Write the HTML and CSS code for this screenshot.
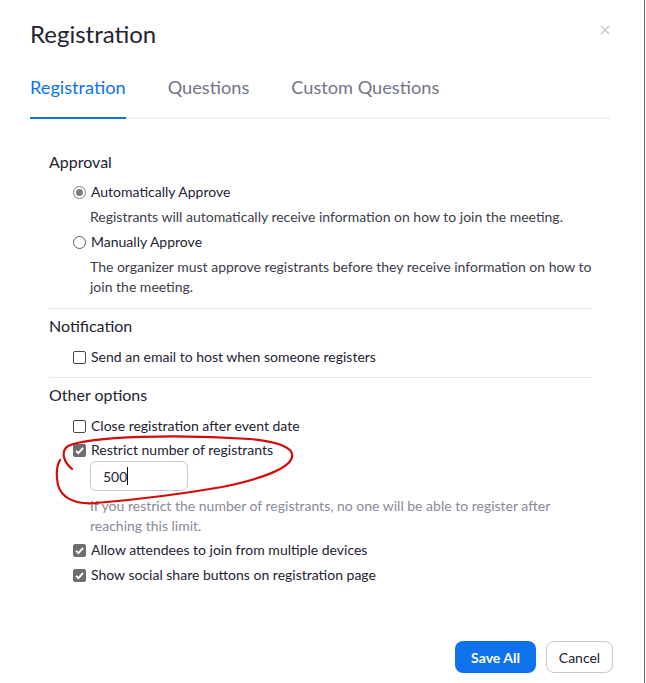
FILE: index.html
```html
<!DOCTYPE html>
<html lang="en">
<head>
<meta charset="utf-8">
<title>Registration</title>
<link rel="stylesheet" href="styles.css">
</head>
<body>
<div class="dialog">
  <div class="header">
    <h1 class="title">Registration</h1>
    <span class="close" aria-label="Close">
      <svg width="10" height="10" viewBox="0 0 10 10"><path d="M1 1L9 9M9 1L1 9" stroke="#c4c4c4" stroke-width="1.3" fill="none"/></svg>
    </span>
  </div>
  <div class="tabs">
    <div class="tab active">Registration</div>
    <div class="tab">Questions</div>
    <div class="tab">Custom Questions</div>
  </div>

  <div class="content">
    <section class="group first">
      <h2 class="group-title">Approval</h2>
      <div class="option">
        <span class="radio checked"></span>
        <span class="label">Automatically Approve</span>
      </div>
      <p class="desc">Registrants will automatically receive information on how to join the meeting.</p>
      <div class="option gap-lg">
        <span class="radio"></span>
        <span class="label">Manually Approve</span>
      </div>
      <p class="desc">The organizer must approve registrants before they receive information on how to join the meeting.</p>
    </section>

    <section class="group second">
      <h2 class="group-title">Notification</h2>
      <div class="option">
        <span class="cb"></span>
        <span class="label">Send an email to host when someone registers</span>
      </div>
    </section>

    <section class="group last">
      <h2 class="group-title">Other options</h2>
      <div class="option">
        <span class="cb"></span>
        <span class="label">Close registration after event date</span>
      </div>
      <div class="option gap-tight">
        <span class="cb checked"><svg width="13" height="13" viewBox="0 0 13 13"><path d="M3 6.8L5.4 9.2L10 4" stroke="#fff" stroke-width="1.9" fill="none"/></svg></span>
        <span class="label">Restrict number of registrants</span>
      </div>
      <div class="input"><span>500</span><span class="caret"></span></div>
      <p class="desc muted">If you restrict the number of registrants, no one will be able to register after reaching this limit.</p>
      <div class="option gap-xs">
        <span class="cb checked"><svg width="13" height="13" viewBox="0 0 13 13"><path d="M3 6.8L5.4 9.2L10 4" stroke="#fff" stroke-width="1.9" fill="none"/></svg></span>
        <span class="label">Allow attendees to join from multiple devices</span>
      </div>
      <div class="option gap-sm">
        <span class="cb checked"><svg width="13" height="13" viewBox="0 0 13 13"><path d="M3 6.8L5.4 9.2L10 4" stroke="#fff" stroke-width="1.9" fill="none"/></svg></span>
        <span class="label">Show social share buttons on registration page</span>
      </div>
    </section>
  </div>

  <div class="footer">
    <button class="btn primary">Save All</button>
    <button class="btn secondary">Cancel</button>
  </div>

  <svg class="annotation" width="646" height="683" viewBox="0 0 646 683">
    <path d="M72 469 C64 462 60 452 68 446 C90 436 180 434 250 439 C280 442 294 448 292 457 C290 468 262 479 222 487 C182 494 132 500 96 503 C72 505 61 496 58 485 C56 475 56 467 60 460" stroke="#d40b0b" stroke-width="2.2" fill="none" stroke-linecap="round"/>
  </svg>
</div>
</body>
</html>
```

FILE: styles.css
```css
* {
  box-sizing: border-box;
}

html, body {
  margin: 0;
  padding: 0;
  background: #ffffff;
}

body {
  font-family: Lato, "Open Sans", "Liberation Sans", sans-serif;
  color: #232333;
}

.dialog {
  position: relative;
  width: 645px;
  height: 683px;
  border-right: 1px solid #6a6a6a;
  display: flex;
  flex-direction: column;
  background: #fff;
}

.header {
  display: flex;
  align-items: center;
  justify-content: space-between;
  padding: 18px 34px 0 30px;
}

.title {
  margin: 0;
  font-size: 24px;
  line-height: 32px;
  font-weight: 400;
  color: #232333;
}

.close {
  display: flex;
  margin-top: -8px;
}

.tabs {
  display: flex;
  gap: 42px;
  margin: 25px 34px 0 30px;
  border-bottom: 2px solid #f1f1f3;
}

.tab {
  font-size: 18.2px;
  line-height: 24px;
  padding-bottom: 18px;
  color: #747487;
  border-bottom: 2px solid transparent;
  margin-bottom: -2px;
}

.tab.active {
  color: #0e72ed;
  border-bottom-color: #0e72ed;
}

.content {
  margin: 32px 52px 0 49px;
}

.group {
  border-bottom: 1px solid #e9e9ec;
  padding-bottom: 11px;
  margin-bottom: 6px;
}

.group.second {
  padding-bottom: 10px;
}

.group.last {
  border-bottom: none;
}

.group-title {
  margin: 0 0 10px 0;
  font-size: 16px;
  line-height: 22px;
  font-weight: 400;
  color: #232333;
}

.group.first .group-title {
  margin-bottom: 9px;
}

.option {
  display: flex;
  align-items: center;
  gap: 5px;
  padding-left: 24px;
  font-size: 14px;
  line-height: 20px;
  color: #232333;
}

.option.gap-lg { margin-top: 5px; }
.option.gap-sm { margin-top: 5px; }
.option.gap-tight { margin-top: 4px; }
.option.gap-xs { margin-top: 5px; }

.desc {
  margin: 5px -4px 0 41px;
  font-size: 14px;
  line-height: 20px;
  color: #3d3d4a;
}

.desc.muted {
  margin-top: 5px;
  color: #8a8a98;
  line-height: 19.5px;
}

.radio {
  width: 13px;
  height: 13px;
  border-radius: 50%;
  border: 1px solid #5a5a62;
  flex: none;
  position: relative;
}

.radio.checked {
  border-color: #7c7c84;
}

.radio.checked::after {
  content: "";
  position: absolute;
  left: 2px;
  top: 2px;
  width: 7px;
  height: 7px;
  border-radius: 50%;
  background: #7c7c84;
}

.cb {
  width: 13px;
  height: 13px;
  border: 1px solid #45454f;
  border-radius: 2px;
  flex: none;
  display: flex;
}

.cb.checked {
  background: #6e6e72;
  border-color: #6e6e72;
}

.cb.checked svg {
  margin: -1px;
}

.input {
  margin: 1px 0 0 41px;
  width: 98px;
  height: 30px;
  border: 1px solid #c8c8d0;
  border-radius: 6px;
  padding-left: 12px;
  display: flex;
  align-items: center;
  font-size: 14px;
  color: #232333;
}

.caret {
  width: 1px;
  height: 18px;
  background: #111;
}

.footer {
  margin-top: auto;
  display: flex;
  justify-content: flex-end;
  gap: 10px;
  padding: 0 31px 10px 0;
}

.btn {
  font-family: Lato, "Open Sans", "Liberation Sans", sans-serif;
  font-size: 14px;
  height: 32px;
  border-radius: 8px;
  padding: 0;
  cursor: pointer;
}

.btn.primary {
  width: 81px;
  background: #0e72ed;
  color: #fff;
  border: none;
  font-weight: 700;
}

.btn.secondary {
  width: 67px;
  background: #fff;
  color: #232333;
  border: 1px solid #c8c8d0;
}

.annotation {
  position: absolute;
  left: 0;
  top: 0;
  pointer-events: none;
}
```
